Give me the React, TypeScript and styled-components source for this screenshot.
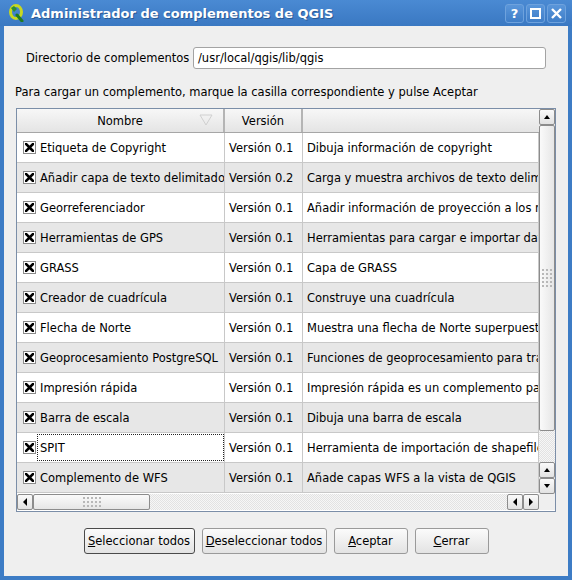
import React from "react";
import styled, { createGlobalStyle } from "styled-components";

const GlobalStyle = createGlobalStyle`
  html, body {
    margin: 0;
    padding: 0;
    background: #3d7cc5;
  }
  * {
    box-sizing: border-box;
  }
`;

const plugins = [
  ["Etiqueta de Copyright", "Versión 0.1", "Dibuja información de copyright"],
  ["Añadir capa de texto delimitado", "Versión 0.2", "Carga y muestra archivos de texto delimitados"],
  ["Georreferenciador", "Versión 0.1", "Añadir información de proyección a los rasters"],
  ["Herramientas de GPS", "Versión 0.1", "Herramientas para cargar e importar datos GPS"],
  ["GRASS", "Versión 0.1", "Capa de GRASS"],
  ["Creador de cuadrícula", "Versión 0.1", "Construye una cuadrícula"],
  ["Flecha de Norte", "Versión 0.1", "Muestra una flecha de Norte superpuesta"],
  ["Geoprocesamiento PostgreSQL", "Versión 0.1", "Funciones de geoprocesamiento para trabajar"],
  ["Impresión rápida", "Versión 0.1", "Impresión rápida es un complemento para imprimir"],
  ["Barra de escala", "Versión 0.1", "Dibuja una barra de escala"],
  ["SPIT", "Versión 0.1", "Herramienta de importación de shapefiles"],
  ["Complemento de WFS", "Versión 0.1", "Añade capas WFS a la vista de QGIS"],
];

const Window = styled.div`
  width: 572px;
  height: 580px;
  display: flex;
  flex-direction: column;
  background: #3d7cc5;
  padding: 0 4px 4px 4px;
  font-family: "DejaVu Sans", "Liberation Sans", sans-serif;
  font-size: 11.5px;
  color: #000;
  white-space: nowrap;
`;

const TitleBar = styled.div`
  height: 26px;
  flex-shrink: 0;
  margin: 0 -4px;
  padding: 0 6px 0 8px;
  display: flex;
  align-items: center;
  background: linear-gradient(#4a8ad3, #3a78c2);
`;

const TitleText = styled.div`
  flex: 1;
  margin-left: 7px;
  color: #fff;
  font-weight: bold;
  font-size: 13px;
  text-shadow: 1px 1px 0 #2a5a95;
`;

const TitleButtons = styled.div`
  display: flex;
  gap: 2px;
`;

const TitleButton = styled.div`
  width: 19px;
  height: 19px;
  border: 1px solid #6ea2dd;
  border-radius: 3px;
  background: linear-gradient(#5a96da, #3f7ec8);
  display: flex;
  align-items: center;
  justify-content: center;
  color: #fff;
  font-weight: bold;
  font-size: 13px;
`;

const Body = styled.div`
  flex: 1;
  background: #efefef;
  display: flex;
  flex-direction: column;
  padding: 21px 22px 0 12px;
`;

const DirRow = styled.div`
  display: flex;
  align-items: center;
  padding-left: 10px;
`;

const DirLabel = styled.div`
  width: 167px;
`;

const DirInput = styled.div`
  flex: 1;
  height: 22px;
  background: #fff;
  border: 1px solid #a3a3a3;
  border-radius: 3px;
  display: flex;
  align-items: center;
  padding-left: 4px;
`;

const Hint = styled.div`
  margin-top: 15px;
  line-height: 16px;
  height: 16px;
  margin-left: -1px;
`;

const TableFrame = styled.div`
  margin-top: 8px;
  width: 540px;
  height: 404px;
  border: 1px solid #7b8ea8;
  display: flex;
  flex-direction: column;
  background: #fff;
`;

const TableTop = styled.div`
  display: flex;
  height: 385px;
`;

const Viewport = styled.div`
  width: 522px;
  overflow: hidden;
  display: flex;
  flex-direction: column;
`;

const HeaderRow = styled.div`
  display: grid;
  grid-template-columns: 208px 78px 236px;
  height: 24px;
  flex-shrink: 0;
  background: linear-gradient(#f7f7f7, #e4e4e4);
  border-bottom: 1px solid #a6a6a6;
`;

const HeaderCell = styled.div<{ $last?: boolean }>`
  position: relative;
  display: flex;
  align-items: center;
  justify-content: center;
  border-right: ${(p) => (p.$last ? "none" : "2px solid #b4b4b4")};
`;

const SortMark = styled.svg`
  position: absolute;
  right: 10px;
  top: 5px;
`;

const Row = styled.div<{ $alt: boolean }>`
  display: grid;
  grid-template-columns: 208px 78px 236px;
  height: 30px;
  flex-shrink: 0;
  background: ${(p) => (p.$alt ? "#e7e7e7" : "#ffffff")};
  border-bottom: 1px solid #c8c8c8;
`;

const Cell = styled.div<{ $pad: number }>`
  display: flex;
  align-items: center;
  padding-left: ${(p) => p.$pad}px;
  border-right: 1px solid #c8c8c8;
  overflow: hidden;
`;

const NameCell = styled.div`
  display: flex;
  align-items: center;
  padding-left: 6px;
  border-right: 1px solid #c8c8c8;
  overflow: hidden;
`;

const NameText = styled.div<{ $focus: boolean }>`
  flex: 1;
  align-self: stretch;
  display: flex;
  align-items: center;
  padding-left: 2px;
  margin: 1px 0 1px 1px;
  border: 1px dotted ${(p) => (p.$focus ? "#222" : "transparent")};
`;

const Check = styled.div`
  width: 13px;
  height: 13px;
  border: 1px solid #8a8a8a;
  background: #fff;
  display: flex;
  align-items: center;
  justify-content: center;
  flex-shrink: 0;
`;

const VScroll = styled.div`
  width: 16px;
  display: flex;
  flex-direction: column;
  background: conic-gradient(#e2e2e2 25%, #f6f6f6 0 50%, #e2e2e2 0 75%, #f6f6f6 0) 0 0 / 2px 2px;
`;

const HScroll = styled.div`
  display: flex;
  height: 16px;
`;

const HTrack = styled.div`
  width: 522px;
  display: flex;
  background: conic-gradient(#e2e2e2 25%, #f6f6f6 0 50%, #e2e2e2 0 75%, #f6f6f6 0) 0 0 / 2px 2px;
`;

const Corner = styled.div`
  width: 16px;
  background: #efefef;
`;

const ArrowBtn = styled.div`
  width: 16px;
  height: 16px;
  flex-shrink: 0;
  border: 1px solid #8c8c8c;
  border-radius: 2px;
  background: linear-gradient(#fafafa, #e2e2e2);
  display: flex;
  align-items: center;
  justify-content: center;
`;

const Handle = styled.div<{ $vertical?: boolean }>`
  border: 1px solid #8c8c8c;
  border-radius: 2px;
  background: ${(p) =>
    p.$vertical
      ? "linear-gradient(90deg, #fafafa, #e6e6e6)"
      : "linear-gradient(#fafafa, #e6e6e6)"};
  display: flex;
  align-items: center;
  justify-content: center;
  flex-shrink: 0;
`;

const Spacer = styled.div`
  flex: 1;
`;

const Grip = styled.div<{ $cols: number; $rows: number }>`
  display: grid;
  grid-template-columns: repeat(${(p) => p.$cols}, 2px);
  grid-template-rows: repeat(${(p) => p.$rows}, 2px);
  gap: 2px;
`;

const Dot = styled.div`
  background: #b8b8b8;
`;

const ButtonRow = styled.div`
  display: flex;
  justify-content: center;
  gap: 7px;
  margin-top: 16px;
  margin-left: 10px;
`;

const Button = styled.div<{ $w: number; $default?: boolean }>`
  width: ${(p) => p.$w}px;
  height: 26px;
  border: 1px solid ${(p) => (p.$default ? "#4a4a4a" : "#9a9a9a")};
  border-radius: 3px;
  background: linear-gradient(#fbfbfb, #e3e3e3);
  display: flex;
  align-items: center;
  justify-content: center;
`;

const Mnemonic = styled.span`
  text-decoration: underline;
`;

const Arrow: React.FC<{ dir: "up" | "down" | "left" | "right" }> = ({ dir }) => {
  const pts = {
    up: "1,5 4,1 7,5",
    down: "1,1 4,5 7,1",
    left: "5,0 1,4 5,8",
    right: "1,0 5,4 1,8",
  }[dir];
  const vertical = dir === "up" || dir === "down";
  return (
    <svg width={vertical ? 8 : 6} height={vertical ? 6 : 8}>
      <polygon points={pts} fill="#000" />
    </svg>
  );
};

const GripDots: React.FC<{ cols: number; rows: number }> = ({ cols, rows }) => (
  <Grip $cols={cols} $rows={rows}>
    {Array.from({ length: cols * rows }).map((_, i) => (
      <Dot key={i} />
    ))}
  </Grip>
);

const QgisLogo = () => (
  <svg width="16" height="18" viewBox="0 0 16 18">
    <ellipse cx="8" cy="8" rx="5.5" ry="6.5" fill="none" stroke="#c8d820" strokeWidth="3" />
    <path d="M9 11 L14 17" stroke="#1f7a1f" strokeWidth="3" strokeLinecap="round" />
    <path d="M3 4 L6 2 L9 5 L6 8 Z" fill="#2f8f2f" />
  </svg>
);

const CheckMark = () => (
  <svg width="9" height="9" viewBox="0 0 9 9">
    <path d="M1 1 L8 8 M8 1 L1 8" stroke="#000" strokeWidth="2.6" strokeLinecap="square" />
  </svg>
);

export default function App() {
  return (
    <>
      <GlobalStyle />
      <Window>
        <TitleBar>
          <QgisLogo />
          <TitleText>Administrador de complementos de QGIS</TitleText>
          <TitleButtons>
            <TitleButton>?</TitleButton>
            <TitleButton>
              <svg width="11" height="11">
                <rect x="1" y="1" width="9" height="9" fill="none" stroke="#fff" strokeWidth="2" />
              </svg>
            </TitleButton>
            <TitleButton>
              <svg width="11" height="11">
                <path d="M1 1 L10 10 M10 1 L1 10" stroke="#fff" strokeWidth="2.4" />
              </svg>
            </TitleButton>
          </TitleButtons>
        </TitleBar>
        <Body>
          <DirRow>
            <DirLabel>Directorio de complementos</DirLabel>
            <DirInput>/usr/local/qgis/lib/qgis</DirInput>
          </DirRow>
          <Hint>Para cargar un complemento, marque la casilla correspondiente y pulse Aceptar</Hint>
          <TableFrame>
            <TableTop>
              <Viewport>
                <HeaderRow>
                  <HeaderCell>
                    Nombre
                    <SortMark width="14" height="12">
                      <polygon points="1,1 13,1 7,11" fill="none" stroke="#d0d0d0" />
                    </SortMark>
                  </HeaderCell>
                  <HeaderCell>Versión</HeaderCell>
                  <HeaderCell $last />
                </HeaderRow>
                {plugins.map(([name, ver, desc], i) => (
                  <Row key={name} $alt={i % 2 === 1}>
                    <NameCell>
                      <Check>
                        <CheckMark />
                      </Check>
                      <NameText $focus={name === "SPIT"}>{name}</NameText>
                    </NameCell>
                    <Cell $pad={4}>{ver}</Cell>
                    <Cell $pad={4}>{desc}</Cell>
                  </Row>
                ))}
              </Viewport>
              <VScroll>
                <ArrowBtn>
                  <Arrow dir="up" />
                </ArrowBtn>
                <Handle $vertical style={{ height: 306 }}>
                  <GripDots cols={3} rows={5} />
                </Handle>
                <Spacer />
                <ArrowBtn>
                  <Arrow dir="up" />
                </ArrowBtn>
                <ArrowBtn>
                  <Arrow dir="down" />
                </ArrowBtn>
              </VScroll>
            </TableTop>
            <HScroll>
              <HTrack>
                <ArrowBtn>
                  <Arrow dir="left" />
                </ArrowBtn>
                <Handle style={{ width: 117 }}>
                  <GripDots cols={5} rows={3} />
                </Handle>
                <Spacer />
                <ArrowBtn>
                  <Arrow dir="left" />
                </ArrowBtn>
                <ArrowBtn>
                  <Arrow dir="right" />
                </ArrowBtn>
              </HTrack>
              <Corner />
            </HScroll>
          </TableFrame>
          <ButtonRow>
            <Button $w={111} $default>
              <span>
                <Mnemonic>S</Mnemonic>eleccionar todos
              </span>
            </Button>
            <Button $w={125}>
              <span>
                <Mnemonic>D</Mnemonic>eseleccionar todos
              </span>
            </Button>
            <Button $w={74}>
              <span>
                <Mnemonic>A</Mnemonic>ceptar
              </span>
            </Button>
            <Button $w={74}>
              <span>
                <Mnemonic>C</Mnemonic>errar
              </span>
            </Button>
          </ButtonRow>
        </Body>
      </Window>
    </>
  );
}
